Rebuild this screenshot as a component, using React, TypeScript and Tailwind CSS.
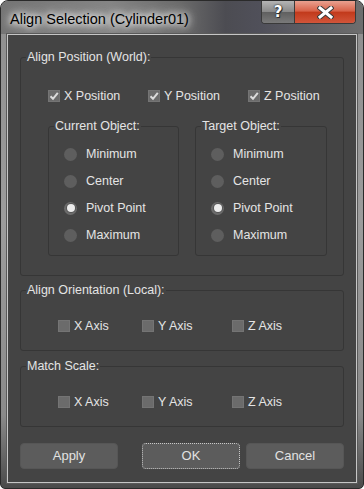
import clsx from "clsx";

const ui = "font-['Liberation_Sans',Arial,sans-serif]";

function CheckBox({
  checked,
  label,
  className,
}: {
  checked?: boolean;
  label: string;
  className?: string;
}) {
  return (
    <label className={clsx("flex items-center gap-[4px] h-[16px]", className)}>
      <span className="w-[12px] h-[12px] shrink-0 bg-[#6b6b6b] border border-[#747474] flex items-center justify-center">
        {checked && (
          <svg width="10" height="10" viewBox="0 0 10 10">
            <path
              d="M1.5 5.2 L4 7.8 L8.8 1.8"
              fill="none"
              stroke="#dcdcdc"
              strokeWidth="2"
            />
          </svg>
        )}
      </span>
      <span>{label}</span>
    </label>
  );
}

function Radio({ on, label }: { on?: boolean; label: string }) {
  return (
    <label className="flex items-center gap-[9px] h-[20px] pl-[15px]">
      <span
        className={clsx(
          "w-[13px] h-[13px] shrink-0 rounded-full flex items-center justify-center",
          on ? "bg-[#6c6c6c]" : "bg-[#5e5e5e]"
        )}
      >
        {on && (
          <span className="w-[8px] h-[8px] rounded-full bg-[#ececec] shadow-[0_0_0_1px_#555]" />
        )}
      </span>
      <span>{label}</span>
    </label>
  );
}

function Group({
  title,
  className,
  children,
}: {
  title: string;
  className?: string;
  children: React.ReactNode;
}) {
  return (
    <fieldset
      className={clsx("border border-[#363636] rounded-[3px] min-w-0", className)}
    >
      <legend className="ml-[5px] px-[1px] leading-[16px]">{title}</legend>
      {children}
    </fieldset>
  );
}

function Button({ label, focused }: { label: string; focused?: boolean }) {
  return (
    <button
      className={clsx(
        "w-[98px] h-[26px] rounded-[4px] bg-[#5c5c5c] text-[#e2e2e2] text-[13px]",
        focused ? "border border-dotted border-[#c8c8c8]" : "border border-[#565656]"
      )}
    >
      {label}
    </button>
  );
}

export default function App() {
  return (
    <div
      className={clsx(
        ui,
        "w-[364px] h-[489px] flex flex-col overflow-hidden rounded-t-[8px] rounded-b-[5px] border border-[#2a2a2a]",
        "bg-[linear-gradient(180deg,#8e8e8e_0%,#9c9c9c_45%,#8a8a8a_85%,#4a4a4a_100%)]"
      )}
    >
      {/* caption */}
      <div className="h-[33px] shrink-0 flex items-start bg-[linear-gradient(90deg,#747474_0%,#858585_30%,#6a6a6a_50%,#4c4c52_62%,#50505a_72%,#6e6e6e_100%)]">
        <div className="pl-[9px] pt-[9px] text-[14.5px] leading-[18px] text-black [text-shadow:0_0_6px_#fff,0_0_10px_#fff,0_0_14px_rgba(255,255,255,0.9)]">
          Align Selection (Cylinder01)
        </div>
        <div className="ml-auto mr-[7px] flex h-[23px] rounded-b-[4px] border border-t-0 border-[#3a3a3a] overflow-hidden shadow-[inset_0_0_0_1px_rgba(255,255,255,0.35)]">
          <div className="w-[33px] h-full flex items-center justify-center border-r border-[#3a3a3a] bg-[linear-gradient(180deg,#b4b4b4_0%,#8a8a8a_48%,#606060_52%,#7a7a7a_100%)]">
            <span className="font-['DejaVu_Sans',sans-serif] font-bold text-[15px] leading-none text-white [text-shadow:0_0_1px_#222,0_0_2px_#222,1px_1px_0_#333]">
              ?
            </span>
          </div>
          <div className="w-[60px] h-full flex items-center justify-center bg-[linear-gradient(180deg,#e9a190_0%,#d8634a_45%,#c23a1c_52%,#d2553a_100%)]">
            <svg width="17" height="13" viewBox="0 0 17 13">
              <path d="M3 2 L14 11 M14 2 L3 11" stroke="#3b3b3b" strokeWidth="5" strokeLinecap="square" />
              <path d="M3 2 L14 11 M14 2 L3 11" stroke="#ffffff" strokeWidth="3" strokeLinecap="square" />
            </svg>
          </div>
        </div>
      </div>

      {/* client area */}
      <div className="mx-[6px] flex-1 border border-[#c6c6c6] shadow-[0_0_0_1px_#5a5a5a]">
        <div className="h-full bg-[#444444] px-[12px] text-[12.5px] leading-[16px] text-[#e4e4e4] flex flex-col">
          <Group title="Align Position (World):" className="mt-[14px] pb-[19px]">
            <div className="mt-[23px] pl-[27px] flex">
              <CheckBox checked label="X Position" className="w-[100px]" />
              <CheckBox checked label="Y Position" className="w-[100px]" />
              <CheckBox checked label="Z Position" />
            </div>
            <div className="mt-[14px] pl-[27px] flex gap-[16px]">
              <Group title="Current Object:" className="w-[131px] pb-[10px]">
                <div className="pt-[10px] flex flex-col gap-[7px]">
                  <Radio label="Minimum" />
                  <Radio label="Center" />
                  <Radio on label="Pivot Point" />
                  <Radio label="Maximum" />
                </div>
              </Group>
              <Group title="Target Object:" className="w-[132px] pb-[10px]">
                <div className="pt-[10px] flex flex-col gap-[7px]">
                  <Radio label="Minimum" />
                  <Radio label="Center" />
                  <Radio on label="Pivot Point" />
                  <Radio label="Maximum" />
                </div>
              </Group>
            </div>
          </Group>

          <Group title="Align Orientation (Local):" className="mt-[6px] pb-[16px]">
            <div className="mt-[20px] pl-[37px] flex">
              <CheckBox label="X Axis" className="w-[84px]" />
              <CheckBox label="Y Axis" className="w-[90px]" />
              <CheckBox label="Z Axis" />
            </div>
          </Group>

          <Group title="Match Scale:" className="mt-[7px] pb-[16px]">
            <div className="mt-[20px] pl-[37px] flex">
              <CheckBox label="X Axis" className="w-[84px]" />
              <CheckBox label="Y Axis" className="w-[90px]" />
              <CheckBox label="Z Axis" />
            </div>
          </Group>

          <div className="mt-[16px] flex">
            <Button label="Apply" />
            <div className="ml-[24px]">
              <Button label="OK" focused />
            </div>
            <div className="ml-[6px]">
              <Button label="Cancel" />
            </div>
          </div>
        </div>
      </div>
      <div className="h-[5px] shrink-0" />
    </div>
  );
}
